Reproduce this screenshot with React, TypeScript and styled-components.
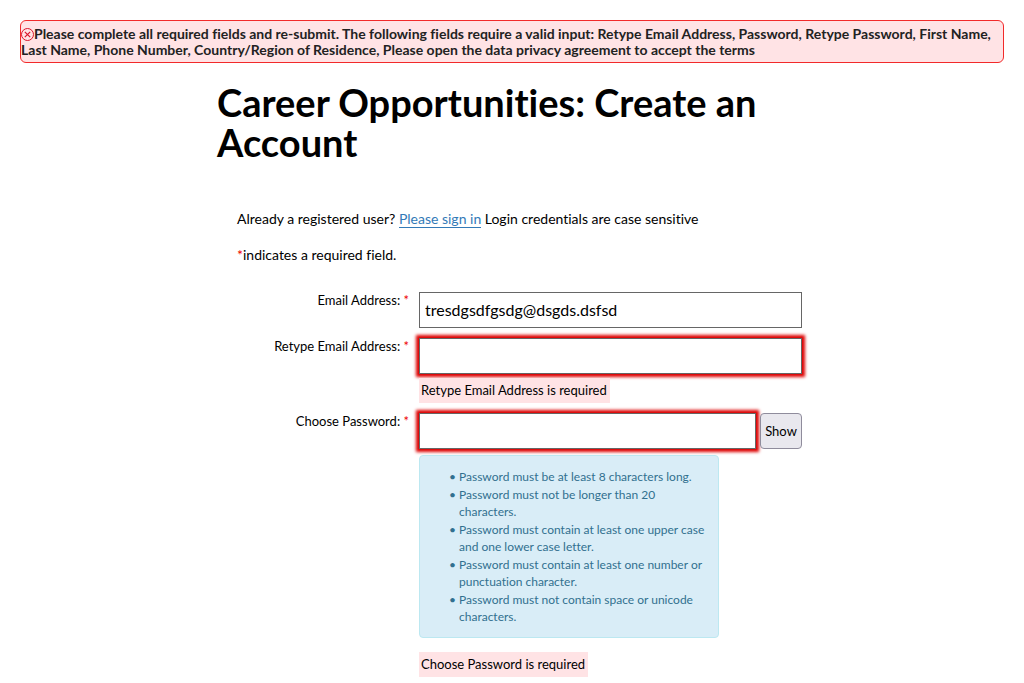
import React, { useState } from "react";
import styled, { createGlobalStyle } from "styled-components";

const GlobalStyle = createGlobalStyle`
  *, *::before, *::after { box-sizing: border-box; }
  body {
    margin: 0;
    background: #fff;
    color: #000;
    font-family: "Trebuchet MS", Lato, sans-serif;
    font-size: 14px;
    font-variant-ligatures: none;
    line-height: 16px;
  }
`;

const Page = styled.main`
  padding: 20px 20px 0;
`;

const Alert = styled.div`
  padding: 5px 0 4px;
  border: 1px solid #f22a2a;
  border-radius: 6px;
  background: #ffe3e5;
  color: #222;
  font-size: 14px;
  font-weight: 700;
`;

const AlertIcon = styled.svg`
  width: 13px;
  height: 13px;
  vertical-align: -2px;
`;

const Content = styled.div`
  width: 100%;
  max-width: 590px;
  margin: 19px auto 0;
`;

const Title = styled.h1`
  margin: 0;
  font-size: 38px;
  font-weight: 700;
  line-height: 40px;
`;

const Body = styled.div`
  padding: 49px 5px 0 20px;
`;

const Note = styled.p`
  margin: 0 0 20px;
`;

const Link = styled.a`
  color: #337ab7;
  text-decoration: none;
  border-bottom: 1px solid #337ab7;
`;

const Star = styled.span`
  color: #e00;
`;

const Form = styled.form`
  padding-top: 9px;
`;

const Row = styled.div`
  display: grid;
  grid-template-columns: 172px minmax(0, 1fr);
  column-gap: 10px;
  margin-bottom: 10px;
`;

const Label = styled.label`
  font-size: 13px;
  text-align: right;
`;

const Field = styled.div`
  display: flex;
  flex-direction: column;
  align-items: flex-start;
`;

const InputLine = styled.div`
  display: flex;
  gap: 4px;
  width: 100%;
`;

const Input = styled.input<{ $invalid?: boolean }>`
  flex: 1;
  min-width: 0;
  height: 36px;
  padding: 0 5px 2px;
  border: 1px solid #666;
  border-radius: 0;
  background: #fff;
  color: #000;
  font: inherit;
  font-size: 16px;
  box-shadow: ${(p) => (p.$invalid ? "0 0 3px 3px #d00" : "none")};
`;

const ShowButton = styled.button`
  width: 42px;
  height: 36px;
  padding: 0;
  border: 1px solid #8f8c9c;
  border-radius: 4px;
  background: #e9e8ee;
  color: #000;
  font: inherit;
  font-size: 13px;
`;

const ErrorText = styled.span<{ $gap: number }>`
  margin-top: ${(p) => p.$gap}px;
  padding: 4px 3px 5px 2px;
  background: #ffe3e5;
  font-size: 13px;
`;

const Rules = styled.ul`
  width: 300px;
  max-width: 100%;
  margin: 6px 0 0;
  padding: 12px 6px 11px 39px;
  border: 1px solid #bce8f1;
  border-radius: 4px;
  background: #d9edf7;
  color: #31708f;
  font-size: 12px;
  line-height: 17px;
  list-style-type: "• ";
`;

const Rule = styled.li`
  margin-bottom: 1px;
`;

const rules = [
  "Password must be at least 8 characters long.",
  "Password must not be longer than 20 characters.",
  "Password must contain at least one upper case and one lower case letter.",
  "Password must contain at least one number or punctuation character.",
  "Password must not contain space or unicode characters.",
];

export default function App() {
  const [email, setEmail] = useState("tresdgsdfgsdg@dsgds.dsfsd");
  const [shown, setShown] = useState(false);

  return (
    <>
      <GlobalStyle />
      <Page>
        <Alert role="alert">
          <AlertIcon viewBox="0 0 13 13" fill="none" stroke="#d9152b" aria-hidden="true">
            <circle cx="6.5" cy="6.5" r="6" />
            <path d="M3.8 3.8l5.4 5.4M9.2 3.8l-5.4 5.4" strokeWidth="1.2" />
          </AlertIcon>
          Please complete all required fields and re-submit. The following fields require a valid
          input: Retype Email Address, Password, Retype Password, First Name, Last Name, Phone
          Number, Country/Region of Residence, Please open the data privacy agreement to accept the
          terms
        </Alert>
        <Content>
          <Title>Career Opportunities: Create an Account</Title>
          <Body>
            <Note>
              Already a registered user? <Link href="#signin">Please sign in</Link> Login
              credentials are case sensitive
            </Note>
            <Note>
              <Star>*</Star>indicates a required field.
            </Note>
            <Form>
              <Row>
                <Label htmlFor="email">
                  Email Address: <Star>*</Star>
                </Label>
                <Field>
                  <InputLine>
                    <Input id="email" value={email} onChange={(e) => setEmail(e.target.value)} />
                  </InputLine>
                </Field>
              </Row>
              <Row>
                <Label htmlFor="retype">
                  Retype Email Address: <Star>*</Star>
                </Label>
                <Field>
                  <InputLine>
                    <Input id="retype" $invalid aria-invalid="true" />
                  </InputLine>
                  <ErrorText $gap={4}>Retype Email Address is required</ErrorText>
                </Field>
              </Row>
              <Row>
                <Label htmlFor="password">
                  Choose Password: <Star>*</Star>
                </Label>
                <Field>
                  <InputLine>
                    <Input
                      id="password"
                      type={shown ? "text" : "password"}
                      $invalid
                      aria-invalid="true"
                    />
                    <ShowButton type="button" onClick={() => setShown(!shown)}>
                      Show
                    </ShowButton>
                  </InputLine>
                  <Rules>
                    {rules.map((rule) => (
                      <Rule key={rule}>{rule}</Rule>
                    ))}
                  </Rules>
                  <ErrorText $gap={14}>Choose Password is required</ErrorText>
                </Field>
              </Row>
            </Form>
          </Body>
        </Content>
      </Page>
    </>
  );
}
